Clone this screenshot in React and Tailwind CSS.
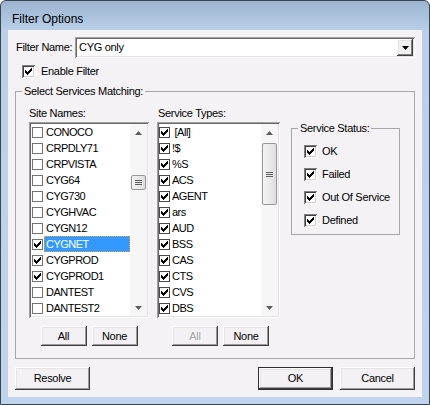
import React from 'react';

const sites = [
  ['CONOCO', false], ['CRPDLY71', false], ['CRPVISTA', false], ['CYG64', false],
  ['CYG730', false], ['CYGHVAC', false], ['CYGN12', false], ['CYGNET', true, true],
  ['CYGPROD', true], ['CYGPROD1', true], ['DANTEST', false], ['DANTEST2', false],
];
const services = ['\u00a0[All]', '!$', '%S', 'ACS', 'AGENT', 'ars', 'AUD', 'BSS', 'CAS', 'CTS', 'CVS', 'DBS'];
const statuses = ['OK', 'Failed', 'Out Of Service', 'Defined'];

// classic 7x7 pixel check
function CheckMark() {
  return (
    <svg width="7" height="7" viewBox="0 0 7 7" shapeRendering="crispEdges">
      <path d="M0 2h1v3h-1z M1 3h1v3h-1z M2 4h1v3h-1z M3 3h1v3h-1z M4 2h1v3h-1z M5 1h1v3h-1z M6 0h1v3h-1z" fill="#000" />
    </svg>
  );
}

function Box3D({ checked }) {
  return (
    <span className="w-[13px] h-[13px] shrink-0 bg-white flex items-center justify-center shadow-[inset_1px_1px_0_#808080,inset_-1px_-1px_0_#ffffff,inset_2px_2px_0_#404040,inset_-2px_-2px_0_#d4d0c8]">
      {checked && <CheckMark />}
    </span>
  );
}

function FlatBox({ checked, dark }) {
  return (
    <span className={`w-[11px] h-[11px] shrink-0 bg-white border flex items-center justify-center ${dark ? 'border-[#4a4a4a]' : 'border-[#737373]'}`}>
      {checked && <CheckMark />}
    </span>
  );
}

function Btn({ children, className, disabled, def }) {
  return (
    <div
      className={`flex items-center justify-center bg-[#f3f1f4] shadow-[inset_-1px_-1px_0_#404040,inset_1px_1px_0_#ffffff,inset_-2px_-2px_0_#9a9a9a,inset_2px_2px_0_#e4e4e4] ${def ? 'border border-[#2e2e2e]' : ''} ${disabled ? 'text-[#a0a0a0] [text-shadow:1px_1px_0_#ffffff]' : 'text-black'} ${className}`}
    >
      {children}
    </div>
  );
}

function Arrow({ down }) {
  return (
    <div className="h-[17px] w-full flex items-center justify-center">
      <svg width="7" height="4" viewBox="0 0 7 4">
        <path d={down ? 'M0 0L3.5 4L7 0Z' : 'M0 4L3.5 0L7 4Z'} fill="#5c5c5c" />
      </svg>
    </div>
  );
}

function Scrollbar({ thumb }) {
  return (
    <div className="w-[17px] shrink-0 bg-[#f6f6f6] flex flex-col">
      <Arrow />
      <div className="flex-1">
        <div className={`mx-[1px] rounded-[2px] border border-[#979797] bg-[linear-gradient(to_right,#f4f4f4,#dedede)] flex flex-col items-center justify-center gap-[1px] ${thumb}`}>
          <span className="w-[7px] h-[1px] bg-[#5f5f5f]" />
          <span className="w-[7px] h-[1px] bg-[#5f5f5f]" />
          <span className="w-[7px] h-[1px] bg-[#5f5f5f]" />
        </div>
      </div>
      <Arrow down />
    </div>
  );
}

const sunken =
  'bg-white p-[2px] shadow-[inset_1px_1px_0_#a0a0a0,inset_-1px_-1px_0_#ffffff,inset_2px_2px_0_#696969,inset_-2px_-2px_0_#e3e3e3]';

export default function App() {
  return (
    <div className="w-[430px] h-[405px] rounded-t-[6px] border border-[#3b4552] bg-[linear-gradient(to_bottom,#9cb4d0_0px,#bad0e9_30px,#bfd4ec_100%)] flex flex-col font-['Liberation_Sans',Arial,sans-serif] text-black">
      <div className="h-[29px] pl-[11px] pt-[11px] text-[12px] leading-[14px]">Filter Options</div>

      <div className="mx-[7px] w-[414px] h-[367px] bg-[#f4f2f5] px-[7px] pt-[7px] flex flex-col text-[11px] leading-[13px] tracking-[-0.3px]">
        {/* filter name */}
        <div className="flex items-center h-[21px]">
          <span className="w-[60px] pl-[1px]">Filter Name:</span>
          <div className={`w-[340px] h-[21px] flex items-center ${sunken}`}>
            <span className="flex-1 pl-[2px]">CYG only</span>
            <div className="w-[16px] h-[17px] flex items-center justify-center bg-[#f0f0f0] shadow-[inset_-1px_-1px_0_#404040,inset_1px_1px_0_#ffffff,inset_-2px_-2px_0_#808080,inset_2px_2px_0_#e3e3e3]">
              <svg width="7" height="4" viewBox="0 0 7 4">
                <path d="M0 0L3.5 4L7 0Z" fill="#000" />
              </svg>
            </div>
          </div>
        </div>

        {/* enable */}
        <div className="flex items-center mt-[7px] h-[13px] pl-[7px]">
          <Box3D checked />
          <span className="ml-[6px]">Enable Filter</span>
        </div>

        {/* group */}
        <fieldset className="mt-[7px] w-[400px] border border-[#a7a7a7] p-0 m-0 min-w-0">
          <legend className="ml-[6px] px-[2px] h-[13px] leading-[13px]">Select Services Matching:</legend>
          <div className="pl-[13px] pt-[9px] pb-[12px] flex items-start">
            {/* site names */}
            <div className="w-[120px] flex flex-col">
              <span className="h-[13px]">Site Names:</span>
              <div className={`mt-[2px] h-[196px] flex ${sunken}`}>
                <div className="flex-1 flex flex-col tracking-[-0.5px]">
                  {sites.map(([name, checked, sel]) => (
                    <div key={name} className="h-[16px] flex items-center">
                      <span className="ml-[1px]">
                        <FlatBox checked={checked} />
                      </span>
                      {sel ? (
                        <span className="ml-[1px] flex-1 h-[16px] flex items-center pl-[1px] bg-[#3399ff] text-white border border-dotted border-[#e0a050]">
                          {name}
                        </span>
                      ) : (
                        <span className="ml-[2px] pl-[1px]">{name}</span>
                      )}
                    </div>
                  ))}
                </div>
                <Scrollbar thumb="mt-[34px] h-[15px]" />
              </div>
              <div className="mt-[8px] flex justify-center gap-[5px]">
                <Btn className="w-[46px] h-[20px]">All</Btn>
                <Btn className="w-[46px] h-[20px]">None</Btn>
              </div>
            </div>

            {/* service types */}
            <div className="ml-[8px] w-[123px] flex flex-col">
              <span className="h-[13px] pl-[1px]">Service Types:</span>
              <div className={`mt-[2px] h-[196px] flex ${sunken}`}>
                <div className="flex-1 flex flex-col tracking-[-0.5px]">
                  {services.map((name) => (
                    <div key={name} className="h-[16px] flex items-center">
                      <FlatBox checked dark />
                      <span className="ml-[2px]">{name}</span>
                    </div>
                  ))}
                </div>
                <Scrollbar thumb="mt-[2px] h-[62px]" />
              </div>
              <div className="mt-[8px] flex justify-center gap-[5px] pl-[4px]">
                <Btn className="w-[46px] h-[20px]" disabled>All</Btn>
                <Btn className="w-[46px] h-[20px]">None</Btn>
              </div>
            </div>

            {/* service status */}
            <fieldset className="ml-[11px] mt-[15px] w-[109px] border border-[#a7a7a7] p-0 m-0 min-w-0">
              <legend className="ml-[6px] px-[2px] h-[13px] leading-[13px]">Service Status:</legend>
              <div className="pl-[12px] pt-[10px] pb-[7px] flex flex-col gap-[10px]">
                {statuses.map((s) => (
                  <div key={s} className="h-[13px] flex items-center">
                    <Box3D checked />
                    <span className="ml-[5px]">{s}</span>
                  </div>
                ))}
              </div>
            </fieldset>
          </div>
        </fieldset>

        {/* bottom buttons */}
        <div className="mt-[8px] flex items-center">
          <Btn className="w-[75px] h-[23px]">Resolve</Btn>
          <div className="ml-auto flex gap-[7px]">
            <Btn className="w-[75px] h-[23px]" def>OK</Btn>
            <Btn className="w-[75px] h-[23px]">Cancel</Btn>
          </div>
        </div>
      </div>
    </div>
  );
}
